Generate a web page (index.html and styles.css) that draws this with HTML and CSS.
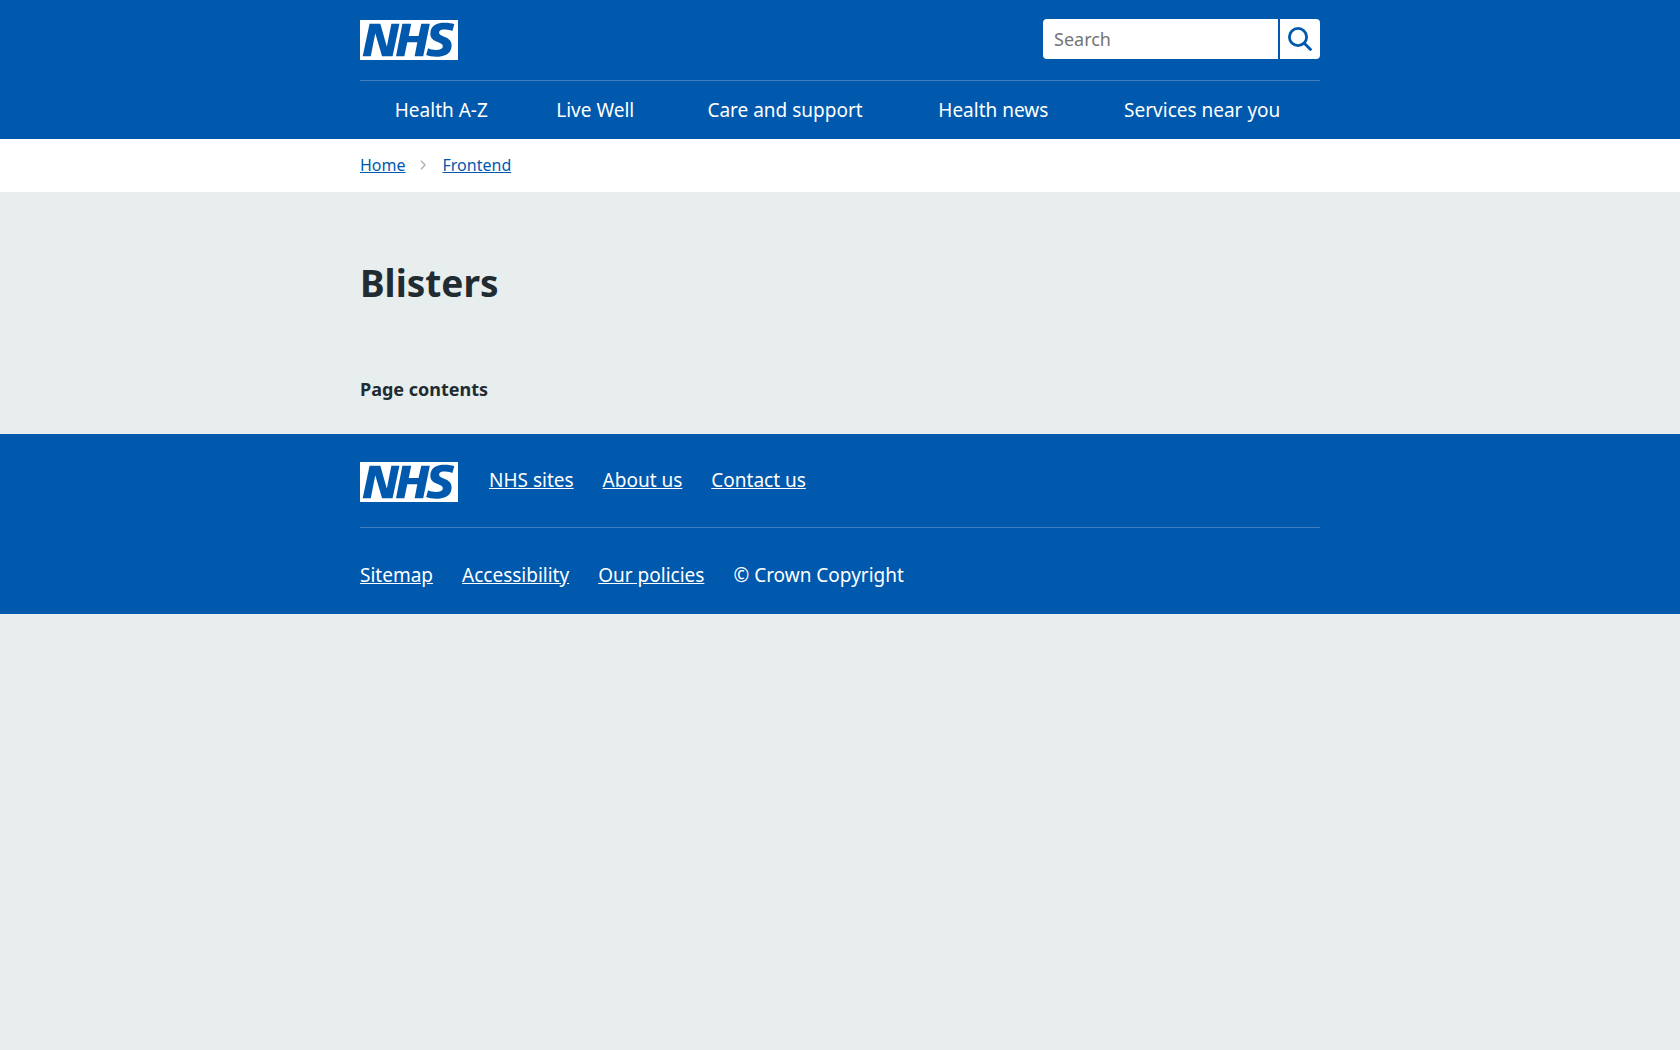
FILE: index.html
```html
<!DOCTYPE html>
<html lang="en">
<head>
  <meta charset="utf-8">
  <meta name="viewport" content="width=device-width, initial-scale=1">
  <title>Blisters - NHS</title>
  <link rel="stylesheet" href="styles.css">
</head>
<body>
  <svg class="sprite" aria-hidden="true">
    <symbol id="nhs-logo" viewBox="0 0 40 16" preserveAspectRatio="none">
      <path fill="#fff" d="M0 0h40v16H0z"/>
      <path fill="#0059ad" d="M3.9 1.5h4.4l2.6 9h.1l1.8-9h3.3l-2.8 13H9l-2.7-9h-.1l-1.8 9H1.1M17.3 1.5h3.6l-1 4.9h4L25 1.5h3.5l-2.7 13h-3.5l1.1-5.6h-4.1l-1.2 5.6h-3.4M37.7 4.4c-.7-.3-1.6-.6-2.9-.6-1.4 0-2.5.2-2.5 1.3 0 1.8 5.1 1.2 5.1 5.1 0 3.6-3.3 4.5-6.4 4.5-1.3 0-2.9-.3-4-.7l.8-2.7c.7.4 2.1.7 3.2.7s2.8-.2 2.8-1.5c0-2.1-5.1-1.3-5.1-5 0-3.4 2.9-4.4 5.8-4.4 1.6 0 3.1.2 4 .6"/>
    </symbol>
  </svg>

  <header class="header">
    <div class="container">
      <div class="header-top">
        <a class="logo" href="#" aria-label="NHS homepage"><svg class="logo-svg" aria-hidden="true"><use href="#nhs-logo"/></svg></a>
        <form class="search" role="search">
          <input class="search-input" type="search" placeholder="Search" aria-label="Search the NHS website">
          <button class="search-button" type="button" aria-label="Search">
            <svg class="search-icon" viewBox="0 0 24 24" aria-hidden="true"><circle cx="10" cy="10" r="8.6"/><path d="M16 16l7.3 7.3"/></svg>
          </button>
        </form>
      </div>
      <nav aria-label="Primary navigation">
        <ul class="nav-list">
          <li class="nav-item"><a class="nav-link" href="#">Health A-Z</a></li>
          <li class="nav-item"><a class="nav-link" href="#">Live Well</a></li>
          <li class="nav-item"><a class="nav-link" href="#">Care and support</a></li>
          <li class="nav-item"><a class="nav-link" href="#">Health news</a></li>
          <li class="nav-item"><a class="nav-link" href="#">Services near you</a></li>
        </ul>
      </nav>
    </div>
  </header>

  <nav class="breadcrumb" aria-label="Breadcrumb">
    <ol class="container breadcrumb-list">
      <li><a class="breadcrumb-link" href="#">Home</a></li>
      <li class="breadcrumb-item"><svg class="chevron" viewBox="0 0 6 10" aria-hidden="true"><path d="M1 .8l4 4.2-4 4.2"/></svg><a class="breadcrumb-link" href="#">Frontend</a></li>
    </ol>
  </nav>

  <main class="container main">
    <h1 class="title">Blisters</h1>
    <h2 class="contents">Page contents</h2>
  </main>

  <footer class="footer">
    <div class="container">
      <div class="footer-top">
        <a class="logo" href="#" aria-label="NHS homepage"><svg class="logo-svg" aria-hidden="true"><use href="#nhs-logo"/></svg></a>
        <ul class="footer-list">
          <li><a class="footer-link" href="#">NHS sites</a></li>
          <li><a class="footer-link" href="#">About us</a></li>
          <li><a class="footer-link" href="#">Contact us</a></li>
        </ul>
      </div>
      <ul class="footer-list footer-bottom">
        <li><a class="footer-link" href="#">Sitemap</a></li>
        <li><a class="footer-link" href="#">Accessibility</a></li>
        <li><a class="footer-link" href="#">Our policies</a></li>
        <li>© Crown Copyright</li>
      </ul>
    </div>
  </footer>
</body>
</html>
```

FILE: styles.css
```css
* {
  box-sizing: border-box;
}

body {
  margin: 0;
  background: #e8edee;
  color: #212b32;
  font-family: "Noto Sans", "Open Sans", sans-serif;
  font-size: 19px;
  line-height: 28px;
}

ul,
ol {
  margin: 0;
  padding: 0;
  list-style: none;
}

.sprite {
  display: none;
}

.container {
  max-width: 960px;
  margin: 0 auto;
}

.header,
.footer {
  background: #0059ad;
  color: #fff;
}

.header-top {
  display: flex;
  justify-content: space-between;
  padding: 19px 0 20px;
  border-bottom: 1px solid #407fc0;
}

.logo {
  display: block;
  flex: none;
  padding-top: 1px;
}

.logo-svg {
  display: block;
  width: 98px;
  height: 40px;
}

.search {
  display: flex;
  gap: 2px;
}

.search-input {
  width: 235px;
  height: 40px;
  padding: 0 11px;
  border: 0;
  border-radius: 4px 0 0 4px;
  background: #fff;
  color: #212b32;
  font: inherit;
  font-size: 18px;
}

.search-input::placeholder {
  color: #757575;
  opacity: 1;
}

.search-button {
  display: flex;
  align-items: center;
  justify-content: center;
  width: 40px;
  height: 40px;
  padding: 0;
  border: 0;
  border-radius: 0 4px 4px 0;
  background: #fff;
}

.search-icon {
  width: 24px;
  height: 24px;
  fill: none;
  stroke: #0059ad;
  stroke-width: 2.8;
}

.nav-list {
  display: table;
  width: 100%;
}

.nav-item {
  display: table-cell;
  padding: 15px 24px;
  text-align: center;
  white-space: nowrap;
}

.nav-link {
  color: #fff;
  text-decoration: none;
}

.breadcrumb {
  padding: 14px 0 15px;
  background: #fff;
  font-size: 16px;
  line-height: 24px;
}

.breadcrumb-list,
.breadcrumb-item {
  display: flex;
  align-items: center;
}

.breadcrumb-list {
  gap: 14px;
}

.breadcrumb-item {
  gap: 17px;
}

.breadcrumb-link {
  color: #0059ad;
}

.chevron {
  width: 6px;
  height: 10px;
  fill: none;
  stroke: #aeb7bd;
  stroke-width: 1.6;
}

.main {
  padding: 63px 0 31px;
}

.title {
  margin: 0 0 64px;
  font-size: 37px;
  line-height: 56px;
}

.contents {
  margin: 0;
  font-size: 18px;
  line-height: 28px;
}

.footer {
  padding: 27px 0 25px;
}

.footer-top {
  display: flex;
  gap: 31px;
  padding-bottom: 25px;
  border-bottom: 1px solid #407fc0;
}

.footer-list {
  display: flex;
  flex-wrap: wrap;
  gap: 0 29px;
  padding-top: 5px;
}

.footer-bottom {
  padding-top: 33px;
}

.footer-link {
  color: #fff;
}
```
